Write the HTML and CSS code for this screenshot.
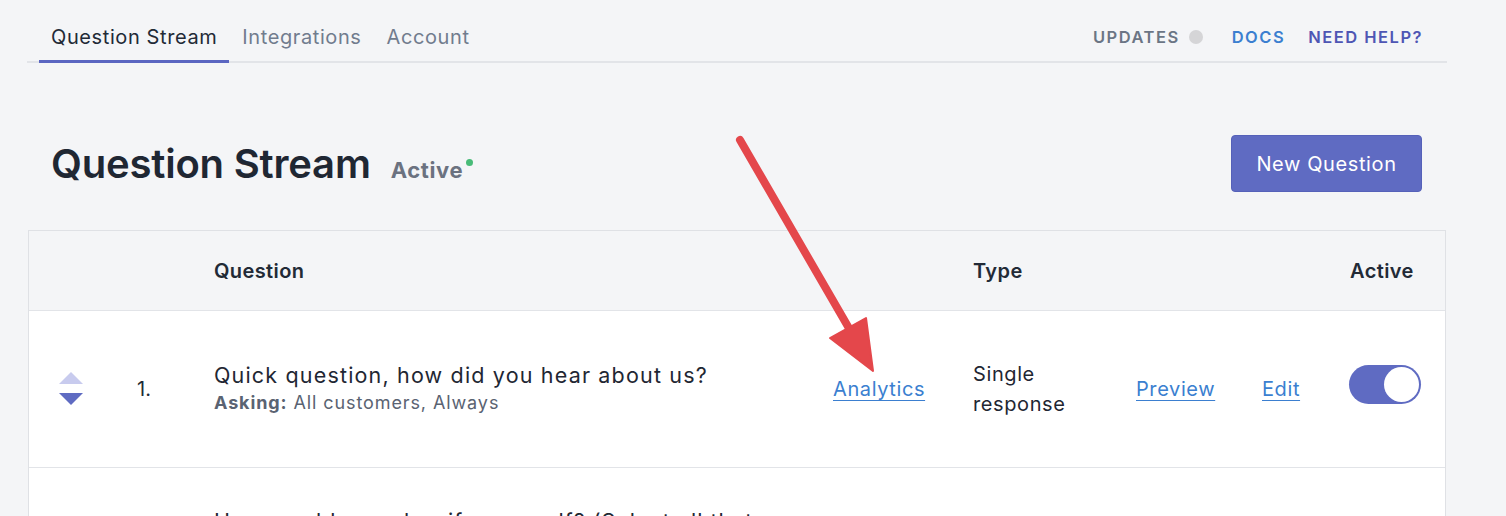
FILE: index.html
```html
<!DOCTYPE html>
<html>
<head>
<meta charset="utf-8">
<link rel="stylesheet" href="styles.css">
</head>
<body>
<div class="page">
  <nav class="nav">
    <div class="tabs">
      <a class="tab active">Question Stream</a>
      <a class="tab">Integrations</a>
      <a class="tab">Account</a>
    </div>
    <div class="nav-right">
      <span class="updates">UPDATES <span class="gray-dot"></span></span>
      <a class="docs">DOCS</a>
      <a class="help">NEED HELP?</a>
    </div>
  </nav>

  <div class="head-row">
    <div class="title-wrap">
      <h1 class="title">Question Stream</h1>
      <span class="status">Active<span class="green-dot"></span></span>
    </div>
    <button class="btn">New Question</button>
  </div>

  <div class="table">
    <div class="row head">
      <div class="c3 th">Question</div>
      <div class="c5 th">Type</div>
      <div class="c8 th th-active">Active</div>
    </div>
    <div class="row body">
      <div class="c1 sort">
        <span class="tri up"></span>
        <span class="tri down"></span>
      </div>
      <div class="c2 num">1.</div>
      <div class="c3 q">
        <div class="q-title">Quick question, how did you hear about us?</div>
        <div class="q-sub"><b>Asking:</b> All customers, Always</div>
      </div>
      <div class="c4"><a class="link">Analytics</a></div>
      <div class="c5 type">Single<br>response</div>
      <div class="c6"><a class="link">Preview</a></div>
      <div class="c7"><a class="link">Edit</a></div>
      <div class="c8 tog-cell"><span class="toggle"><span class="knob"></span></span></div>
    </div>
    <div class="row body last">
      <div class="c3 q">
        <div class="q-title q-next">How would you classify yourself? (Select all that</div>
      </div>
    </div>
  </div>
</div>

<svg class="annot" width="1506" height="516" viewBox="0 0 1506 516">
  <line x1="740" y1="140" x2="850" y2="330" stroke="#e4474b" stroke-width="8" stroke-linecap="round"/>
  <polygon points="830,338 866,318 873,371" fill="#e4474b" stroke="#e4474b" stroke-width="2" stroke-linejoin="round"/>
</svg>
</body>
</html>
```

FILE: styles.css
```css
* { box-sizing: border-box; }
html, body { margin: 0; padding: 0; }
body {
  background: #f4f5f7;
  font-family: Inter, "Noto Sans", "Liberation Sans", sans-serif;
  color: #1f2733;
  width: 1506px;
  height: 516px;
  overflow: hidden;
  position: relative;
}
.page {
  margin-left: 27px;
  width: 1420px;
}
.nav {
  display: flex;
  justify-content: space-between;
  padding-top: 14px;
  height: 63px;
  border-bottom: 2px solid #e2e4e8;
}
.tabs { display: flex; margin-left: 12px; }
.tab {
  display: flex;
  align-items: center;
  padding: 0 12px;
  font-size: 20px;
  letter-spacing: 0.6px;
  color: #717c8e;
  border-bottom: 3px solid transparent;
  margin-bottom: -2px;
}
.tab + .tab { margin-left: 1px; }
.tab.active { color: #222a36; border-bottom-color: #5b66c1; }
.nav-right {
  display: flex;
  align-items: center;
  padding-right: 24px;
  padding-bottom: 2px;
  font-size: 16.5px;
  font-weight: 600;
  letter-spacing: 1.5px;
}
.updates { color: #6b7585; display: flex; align-items: center; }
.gray-dot {
  display: inline-block;
  width: 14px; height: 14px;
  border-radius: 50%;
  background: #d5d5d7;
  margin-left: 9px;
}
.docs { color: #3b7fd0; margin-left: 29px; }
.help { color: #4e56b4; margin-left: 23px; }

.head-row {
  display: flex;
  justify-content: space-between;
  align-items: center;
  margin-top: 72px;
  padding: 0 25px 0 24px;
  height: 57px;
}
.title-wrap { display: flex; align-items: baseline; }
.title {
  margin: 0;
  font-size: 40px;
  font-weight: 600;
  color: #1f2733;
  letter-spacing: -0.2px;
}
.status {
  margin-left: 20px;
  font-size: 22px;
  font-weight: 700;
  letter-spacing: 0.6px;
  color: #6b7280;
  position: relative;
}
.green-dot {
  position: absolute;
  right: -10px;
  top: 2px;
  width: 7px; height: 7px;
  border-radius: 50%;
  background: #48bb78;
}
.btn {
  height: 57px;
  width: 191px;
  background: #5f6bc2;
  border: 1px solid #5561b9;
  border-radius: 4px;
  color: #fff;
  font-family: inherit;
  font-size: 20px;
  letter-spacing: 0.6px;
}

.table {
  margin: 38px 1px 0 1px;
  border: 1px solid #dfe1e5;
  border-bottom: none;
  background: #fff;
}
.row {
  display: grid;
  grid-template-columns: 108px 77px 619px 140px 163px 126px 87px 72px;
  padding-right: 24px;
  align-items: center;
  border-bottom: 1px solid #e2e4e8;
}
.row.head { height: 80px; background: #f4f5f7; }
.row.body { height: 157px; background: #fff; }
.c1 { grid-column: 1; }
.c2 { grid-column: 2; }
.c3 { grid-column: 3; }
.c4 { grid-column: 4; }
.c5 { grid-column: 5; }
.c6 { grid-column: 6; }
.c7 { grid-column: 7; }
.c8 { grid-column: 8; }
.th { font-size: 20px; font-weight: 600; letter-spacing: 0.4px; color: #222a36; }
.th-active { padding-left: 1px; }
.sort {
  width: 84px;
  display: flex;
  flex-direction: column;
  align-items: center;
  gap: 9px;
  margin-bottom: 1px;
}
.tri { width: 0; height: 0; border-left: 12px solid transparent; border-right: 12px solid transparent; }
.tri.up { border-bottom: 12px solid #c8cbee; }
.tri.down { border-top: 12px solid #5f6bc2; }
.num { font-size: 20px; color: #222a36; }
.q { margin-bottom: 3px; }
.q-title { font-size: 21.5px; line-height: 30px; letter-spacing: 1.17px; color: #1f2733; }
.q-next { letter-spacing: 1px; }
.q-sub { font-size: 18px; line-height: 26px; letter-spacing: 0.9px; color: #5a6372; }
.q-sub b { color: #5a6372; font-weight: 700; }
.link {
  font-size: 20px;
  letter-spacing: 0.6px;
  color: #3b7fd0;
  text-decoration: underline;
  text-underline-offset: 4px;
  text-decoration-thickness: 1px;
}
.type { font-size: 20px; letter-spacing: 0.6px; line-height: 30px; color: #1f2733; }
.tog-cell { margin-bottom: 9px; }
.toggle {
  display: flex;
  justify-content: flex-end;
  align-items: center;
  width: 72px; height: 39px;
  border-radius: 20px;
  background: #5f6bc2;
  padding: 2px;
}
.knob { width: 35px; height: 35px; border-radius: 50%; background: #fff; }
.row.body.last { align-items: start; }
.row.body.last .q { padding-top: 38px; }

.annot { position: absolute; left: 0; top: 0; pointer-events: none; }
```
